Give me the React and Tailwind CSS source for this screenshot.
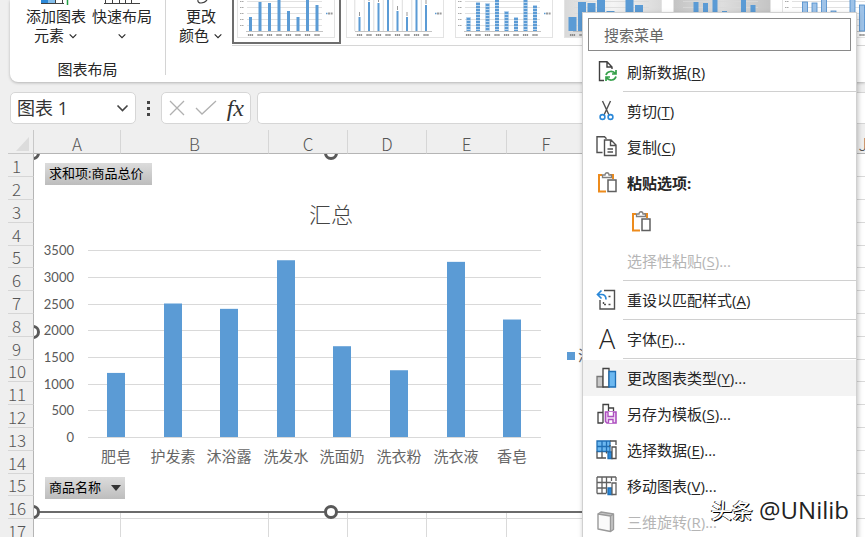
import { useState } from 'react';

const FONT = "font-['Open_Sans','Noto_Sans_CJK_SC',sans-serif]";

const sales = [
    { name: '肥皂', value: 1200 },
    { name: '护发素', value: 2500 },
    { name: '沐浴露', value: 2400 },
    { name: '洗发水', value: 3310 },
    { name: '洗面奶', value: 1700 },
    { name: '洗衣粉', value: 1250 },
    { name: '洗衣液', value: 3280 },
    { name: '香皂', value: 2200 },
];

const ticks = [3500, 3000, 2500, 2000, 1500, 1000, 500, 0];

const columns = [
    { name: 'A', width: 'w-[87px]' },
    { name: 'B', width: 'w-[148px]' },
    { name: 'C', width: 'w-[79px]' },
    { name: 'D', width: 'w-[79px]' },
    { name: 'E', width: 'w-[80px]' },
    { name: 'F', width: 'w-[79px]' },
    { name: 'G', width: 'w-[79px]' },
    { name: 'H', width: 'w-[80px]' },
    { name: 'I', width: 'w-[79px]' },
    { name: 'J', width: 'w-[79px]' },
];

function Chevron({ className }) {
    return (
        <svg viewBox="0 0 12 8" className={className} fill="none" stroke="currentColor" strokeWidth="1.3">
            <path d="M2 2l4 4 4-4" />
        </svg>
    );
}

// Small preview of the chart in one of the gallery styles
function StyleThumb({ variant }) {
    const tops = [17, 2, 3, -4, 11, 17, -4, 5];
    const dark = variant === 'gradient' || variant === 'shaded';
    const barWidth = { plain: 3, thin: 2, striped: 4, gradient: 8, shaded: 5, outline: 5 }[variant];
    return (
        <svg viewBox="0 0 98 38" className="block h-[38px] w-[98px]">
            <defs>
                <linearGradient id={`bg-${variant}`} x1="0" x2="1" y1="0" y2="0">
                    <stop offset="0" stopColor={variant === 'shaded' ? '#c4c4c4' : '#d9d9d9'} />
                    <stop offset="0.5" stopColor={variant === 'shaded' ? '#dedede' : '#f5f5f5'} />
                    <stop offset="1" stopColor={variant === 'shaded' ? '#c4c4c4' : '#d9d9d9'} />
                </linearGradient>
            </defs>
            <rect x="0.5" y="-5" width="97" height="42.5" fill={dark ? `url(#bg-${variant})` : '#fff'} stroke="#e3e3e3" />
            {variant !== 'thin' && [1, 7, 13, 19, 25].map((y) => (
                <path key={y} d={`M10 ${y + 0.5}h75`} stroke="#d9d9d9" strokeWidth="0.8" />
            ))}
            {variant !== 'thin' && !dark && [1, 7, 13, 19, 25].map((y) => (
                <path key={y} d={`M3 ${y + 0.5}h4`} stroke="#aaa" strokeWidth="1" strokeDasharray="1.4 0.4" />
            ))}
            <path d="M9 31.5h77" stroke="#b5b5b5" strokeWidth="0.8" />
            {tops.map((top, i) => {
                const x = 13.5 + i * 9.5 - (variant === 'gradient' ? 5 : 0);
                return (
                    <g key={i}>
                        {variant === 'thin' && <path d={`M${x - 4.7} -1V31`} stroke="#cfcfcf" strokeWidth="0.7" />}
                        <rect
                            x={x - barWidth / 2}
                            y={top}
                            width={barWidth}
                            height={31 - top}
                            fill={variant === 'outline' ? '#9fc3e8' : '#5b9bd5'}
                            stroke={variant === 'outline' ? '#4a8bcb' : 'none'}
                            strokeWidth="0.8"
                        />
                        {variant === 'striped' && (
                            <path d={`M${x} ${top}V31`} stroke="#fff" strokeOpacity="0.75" strokeWidth="4" strokeDasharray="0.8 2.2" />
                        )}
                        {variant === 'thin' && top > 0 && (
                            <path d={`M${x} ${top - 5}v4`} stroke="#999" strokeWidth="1" />
                        )}
                        <path d={`M${x - 2.6} 35h5.4`} stroke="#777" strokeWidth="2" strokeDasharray="1.4 0.5" opacity="0.8" />
                    </g>
                );
            })}
            <path d="M89 13.5h1.5" stroke="#5b9bd5" strokeWidth="1.5" />
            <path d="M91 13.5h5" stroke="#999" strokeWidth="2" strokeDasharray="2 0.6" />
        </svg>
    );
}

function Ribbon() {
    const styles = ['plain', 'thin', 'striped', 'gradient', 'shaded', 'outline'];
    return (
        <header className="ml-[10px] flex h-[82px] shrink-0 overflow-hidden rounded-bl-lg bg-white text-[15px] leading-[19px] text-[#262626] shadow-[0_1px_3px_rgba(0,0,0,0.25)]">
            <section className="mb-[7px] flex w-[156px] shrink-0 flex-col justify-between border-r border-[#d4d4d4]">
                <div className="flex gap-[6px] pl-4">
                    <button type="button" className="flex flex-col items-center">
                        <svg viewBox="0 0 30 7" className="h-[7px] w-[30px]" fill="none">
                            <path d="M0 0h14v3H0z" fill="#2b88d8" />
                            <path d="M7 0h7v3H7z" fill="#83beec" />
                            <path d="M0 3.5h23M14.5 0v3.5M21.5 0v3.5" stroke="#404040" />
                            <path d="M26.5 0v5" stroke="#22a045" strokeWidth="1.5" />
                        </svg>
                        <span>添加图表</span>
                        <span className="flex items-center gap-1">元素 <Chevron className="h-2 w-[10px]" /></span>
                    </button>
                    <button type="button" className="flex flex-col items-center">
                        <svg viewBox="0 0 36 7" className="h-[7px] w-9" fill="none" stroke="#404040">
                            <path d="M0 3.5h36M1.5 0v3.5M8.5 0v3.5M15.5 0v3.5M21.5 0v3.5M27.5 0v3.5" />
                        </svg>
                        <span>快速布局</span>
                        <span className="flex h-[19px] items-center"><Chevron className="h-2 w-[10px]" /></span>
                    </button>
                </div>
                <h2 className="text-center leading-3">图表布局</h2>
            </section>
            <button type="button" className="flex w-[66px] shrink-0 flex-col items-center pl-1">
                <svg viewBox="0 0 20 7" className="h-[7px] w-5" fill="none" stroke="#404040" strokeWidth="1.2">
                    <path d="M7 0c-1 4 6 4 9 0" />
                </svg>
                <span>更改</span>
                <span className="flex items-center gap-1">颜色 <Chevron className="h-2 w-[10px]" /></span>
            </button>
            <div className="flex h-[46px] w-0 grow overflow-hidden border-b border-[#d6d6d6]">
                {styles.map((variant, i) => (
                    <button
                        key={variant}
                        type="button"
                        aria-label={`样式 ${i + 1}`}
                        className={
                            i === 0
                                ? 'h-11 w-[109px] shrink-0 border-2 border-t-0 border-[#6e6e6e] px-[3px] pb-1'
                                : 'h-11 w-[109px] shrink-0 px-[5px] pb-[6px]'
                        }
                    >
                        <StyleThumb variant={variant} />
                    </button>
                ))}
            </div>
        </header>
    );
}

function FormulaBar() {
    const box = 'flex h-8 items-center rounded-[5px] border border-[#d6d6d6] bg-white';
    return (
        <div className="flex shrink-0 gap-[6px] pt-[10px] pb-[6px] pl-[10px]">
            <div className={`${box} w-[126px] pr-[5px]`}>
                <input
                    aria-label="名称框"
                    defaultValue="图表 1"
                    className="w-0 grow pl-[6px] text-lg leading-[22px] text-[#333] outline-none"
                />
                <Chevron className="h-[10px] w-[15px] text-[#444]" />
            </div>
            <svg viewBox="0 0 13 32" className="h-8 w-[13px]" fill="#444">
                <path d="M5 9h3v3H5zM5 15h3v3H5zM5 21h3v3H5z" />
            </svg>
            <div className={`${box} w-[90px] justify-between px-[6px]`}>
                <button type="button" aria-label="取消">
                    <svg viewBox="0 0 18 18" className="h-[18px] w-[18px]" fill="none" stroke="#b0b0b0" strokeWidth="1.3">
                        <path d="M2 2l14 14M16 2L2 16" />
                    </svg>
                </button>
                <button type="button" aria-label="输入">
                    <svg viewBox="0 0 22 18" className="h-[18px] w-[22px]" fill="none" stroke="#b0b0b0" strokeWidth="1.3">
                        <path d="M1 9l6 6L21 2" />
                    </svg>
                </button>
                <button type="button" className="font-['Liberation_Serif',serif] text-2xl leading-6 text-[#333] italic">
                    fx
                </button>
            </div>
            <input aria-label="编辑栏" className={`${box} w-0 grow rounded-r-none border-r-0 px-2 outline-none`} />
        </div>
    );
}

function PivotChart() {
    const y = (value) => 197 - value * 0.0534;
    const pivotButton =
        'ml-[11px] flex h-[22px] items-center self-start bg-linear-to-b from-[#dcdcdc] to-[#bdbdbd] px-1 text-[13px] text-black';
    return (
        <div className="absolute top-6 left-[34px] flex w-[594px] flex-col overflow-hidden border-b-2 border-[#6b6b6b] bg-white pt-[9px] pb-3">
            <button type="button" className={`${pivotButton} w-[107px]`}>求和项:商品总价</button>
            <h1 className="mt-[14px] text-center text-[22px] leading-[30px] font-light text-[#444]">汇总</h1>
            <svg viewBox="0 0 594 230" className="mt-[11px] h-[230px] w-[594px]">
                {ticks.map((tick) => (
                    <g key={tick}>
                        <path d={`M54 ${Math.round(y(tick)) + 0.5}h453`} stroke="#d9d9d9" />
                        <text x="40" y={Math.round(y(tick)) + 5} textAnchor="end" className="fill-[#595959] font-[Lato,sans-serif] text-[13px]">
                            {tick}
                        </text>
                    </g>
                ))}
                {sales.map((item, i) => {
                    const center = Math.round(82 + i * 56.6);
                    return (
                        <g key={item.name}>
                            <rect x={center - 9} y={y(item.value)} width="18" height={197 - y(item.value)} fill="#5b9bd5" />
                            <text x={center} y="222" textAnchor="middle" className="fill-[#666] text-[15px]">
                                {item.name}
                            </text>
                        </g>
                    );
                })}
                <rect x="533" y="112" width="8" height="8" fill="#5b9bd5" />
                <text x="544" y="121" className="fill-[#666] text-[15px]">汇总</text>
            </svg>
            <button type="button" className={`${pivotButton} mt-[7px] w-20 justify-between`}>
                商品名称
                <svg viewBox="0 0 10 6" className="h-[6px] w-[10px]" fill="#333">
                    <path d="M0 0h10L5 6z" />
                </svg>
            </button>
        </div>
    );
}

function Sheet() {
    const rows = Array.from({ length: 17 }, (_, i) => i + 1);
    const handle = 'absolute h-[14px] w-[14px] rounded-full border-[3px] border-[#595959] bg-white';
    return (
        <main className="relative grow overflow-hidden pl-2">
            <table className="w-[895px] table-fixed border-separate border-spacing-0 text-[17px] leading-5 text-[#555]">
                <thead>
                    <tr className="h-6">
                        <th className="w-[26px] border-r border-b border-[#c8c8c8] p-0">
                            <svg viewBox="0 0 25 22" className="h-[22px] w-[25px]" fill="#dcdcdc">
                                <path d="M21 6v14H8z" />
                            </svg>
                        </th>
                        {columns.map((col) => (
                            <th
                                key={col.name}
                                className={`${col.width} border-r border-b border-r-[#d6d6d6] border-b-[#b5b5b5] p-0 pt-1 font-['Noto_Sans_CJK_SC',sans-serif] leading-[18px] font-light`}
                            >
                                {col.name}
                            </th>
                        ))}
                    </tr>
                </thead>
                <tbody>
                    {rows.map((row) => (
                        <tr key={row} className={row % 5 === 0 ? 'h-[22px]' : 'h-[23px]'}>
                            <th className="border-r border-b border-r-[#b5b5b5] border-b-[#d6d6d6] p-0 pt-px pr-2 font-['Noto_Sans_CJK_SC',sans-serif] font-light">
                                {row}
                            </th>
                            {columns.map((col) => (
                                <td key={col.name} className="border-r border-b border-[#dadada] bg-white p-0" />
                            ))}
                        </tr>
                    ))}
                </tbody>
            </table>
            <PivotChart />
            {/* resize handles, cut off by the row and column headers */}
            <div className="absolute top-6 left-[34px] h-[370px] w-[594px] overflow-hidden">
                <span className={`${handle} -top-2 -left-2`} />
                <span className={`${handle} -top-2 left-[290px]`} />
                <span className={`${handle} top-[171px] -left-2`} />
                <span className={`${handle} top-[351px] -left-2`} />
                <span className={`${handle} top-[351px] left-[290px]`} />
            </div>
        </main>
    );
}

const ICON = 'h-[22px] w-[22px] shrink-0';

const icons = {
    refresh: (
        <svg viewBox="0 0 22 22" className={ICON} fill="none" stroke="#404040" strokeWidth="1.4">
            <path d="M8 19.500H3.500V0.800H11L16 6V8M11 0.800V6H16" />
            <path
                d="M10 14c1-4 7-5 9.500-1M20 9v4h-4M20 15.500c-1 4-7 5-9.500 1M10 20v-4h4"
                stroke="#35a04a"
                strokeWidth="1.7"
            />
        </svg>
    ),
    cut: (
        <svg viewBox="0 0 22 22" className={ICON} fill="none" stroke="#505050" strokeWidth="1.4">
            <path d="M6.500 1l6.500 14M14.500 1L8 15" />
            <circle cx="6.500" cy="17" r="2.400" stroke="#2b88d8" strokeWidth="1.600" />
            <circle cx="14.500" cy="17" r="2.400" stroke="#2b88d8" strokeWidth="1.600" />
        </svg>
    ),
    copy: (
        <svg viewBox="0 0 22 22" className={ICON} fill="none" stroke="#505050" strokeWidth="1.4">
            <path d="M6.500 16.500H1V0.800h7.500l2 2" />
            <path d="M8.500 4h6.500l5 5V19.500H8.500zM14.500 4v5.500H20M11.500 13h5.500M11.500 16h5.500" />
        </svg>
    ),
    paste: (
        <svg viewBox="0 0 22 22" className={ICON} fill="none" strokeWidth="1.5">
            <path d="M6 3H3v16.500H10M14 3h3v4" stroke="#ed8b1c" strokeWidth="2" />
            <path d="M6.500 5.500V3H9c0-3 4-3 4 0h2.500v2.500z" stroke="#808080" fill="#fff" strokeWidth="1.300" />
            <path d="M12 8H20V19.500h-8z" stroke="#606060" fill="#fff" />
        </svg>
    ),
    reset: (
        <svg viewBox="0 0 22 22" className={ICON} fill="none" stroke="#505050" strokeWidth="1.4">
            <path d="M8 1.500h10.500v18.500H4V11" />
            <path d="M5.500 1.500L1.500 5.500l4 4M2 5.500h3.500c3 0 4.500 2 4.500 5" stroke="#2b88d8" strokeWidth="1.700" />
            <path d="M12.500 7.500h3M7.500 13v2.500h3M12.500 15.500h3" strokeDasharray="2 1" />
        </svg>
    ),
    font: (
        <span aria-hidden="true" className="w-[22px] shrink-0 text-center text-[27px] leading-8 font-light">A</span>
    ),
    chart: (
        <svg viewBox="0 0 22 22" className={ICON} stroke="#404040" strokeWidth="1.3">
            <path d="M1 9.500h6v10.500H1z" fill="#c8c8c8" stroke="#777" />
            <path d="M7 1.500h6v18.500H7z" fill="#fff" />
            <path d="M13 4.500h6.500v15.500H13z" fill="#6cb8f0" stroke="#1f6fb5" />
        </svg>
    ),
    template: (
        <svg viewBox="0 0 22 22" className={ICON} fill="none" stroke="#404040" strokeWidth="1.3">
            <path d="M7 20H2V9.500H7M7 20V1.500h5.500V8M12.500 5h5v3" />
            <path d="M9.500 9H20V20H11l-1.500-1.500z" fill="#f3e0f6" stroke="#ad4fc0" strokeWidth="1.600" />
            <path d="M12 9v4.500h5.500V9M12.500 20v-3.500h4.500v3.500" fill="#fff" stroke="#ad4fc0" strokeWidth="1.400" />
        </svg>
    ),
    select: (
        <svg viewBox="0 0 22 22" className={ICON} fill="none" stroke="#1f6fb5" strokeWidth="1.3">
            <path d="M1 2h13v10.500H1z" fill="#6cb8f0" />
            <path d="M1 7.500h13M6 2v10.500M10.500 2v10.500" />
            <path d="M14 2h6v4M14 7.500V6M1 12.500v6.500h9M6 12.500V19M10.500 12.500v2" stroke="#505050" />
            <path d="M12 13h4v6.500h-4z" fill="#2b88d8" />
            <path d="M16 8h4v11.500h-4z" fill="#fff" stroke="#505050" />
        </svg>
    ),
    move: (
        <svg viewBox="0 0 22 22" className={ICON} fill="none" stroke="#606060" strokeWidth="1.3">
            <path d="M1 2h19M1 7.500h14M1 13h9.500M1 18.500h9M1 2v16.500M6 2v16.500M10.500 2v16.500M15.500 2v4M20 2v4" />
            <path d="M12 13h4v6.500h-4z" fill="#2b88d8" stroke="#1f6fb5" />
            <path d="M16 8h4v11.500h-4z" fill="#fff" />
        </svg>
    ),
    rotate: (
        <svg viewBox="0 0 22 22" className={ICON} fill="none" stroke="#9a9a9a" strokeWidth="1.4" strokeLinejoin="round">
            <path d="M2 3l3-2 12.500 2v15.500L14.500 20.500" fill="#c8c8c8" />
            <path d="M2 3l12.500 2v15.500L2 18z" fill="#fafafa" />
            <path d="M14.500 5l3-2" />
        </svg>
    ),
};

const menuItems = [
    { id: 'refresh', label: '刷新数据', hotkey: 'R' },
    { id: 'sep1' },
    { id: 'cut', label: '剪切', hotkey: 'T' },
    { id: 'copy', label: '复制', hotkey: 'C' },
    { id: 'paste', heading: '粘贴选项:' },
    { id: 'special', label: '选择性粘贴', hotkey: 'S', dots: true, disabled: true },
    { id: 'sep2' },
    { id: 'reset', label: '重设以匹配样式', hotkey: 'A' },
    { id: 'sep3' },
    { id: 'font', label: '字体', hotkey: 'F', dots: true },
    { id: 'sep4' },
    { id: 'chart', label: '更改图表类型', hotkey: 'Y', dots: true },
    { id: 'template', label: '另存为模板', hotkey: 'S', dots: true },
    { id: 'select', label: '选择数据', hotkey: 'E', dots: true },
    { id: 'move', label: '移动图表', hotkey: 'V', dots: true },
    { id: 'rotate', label: '三维旋转', hotkey: 'R', dots: true, disabled: true },
];

function ContextMenu() {
    const [active, setActive] = useState('chart');
    const row = 'flex h-9 w-full items-center gap-[9px] pl-[13px] text-left';

    return (
        <div className="absolute top-3 left-[582px] w-[275px] border border-[#d0d0d0] bg-white pt-[5px] pb-2 text-[15px] text-[#262626] shadow-[1px_2px_5px_rgba(0,0,0,0.25)]">
            <input
                type="text"
                aria-label="搜索菜单"
                placeholder="搜索菜单"
                className="mb-[3px] ml-[5px] h-[33px] w-[263px] border border-[#8a8a8a] pl-[15px] outline-none placeholder:text-[#666]"
            />
            {menuItems.map((item) => {
                if (item.heading) {
                    return (
                        <div key={item.id}>
                            <div className={`${row} font-bold`}>
                                {icons.paste}
                                <span>{item.heading}</span>
                            </div>
                            <button type="button" aria-label="粘贴" className="ml-[47px] flex h-[42px] items-center">
                                {icons.paste}
                            </button>
                        </div>
                    );
                }
                if (!item.label) {
                    return <hr key={item.id} className="my-px ml-10 border-[#d0d0d0]" />;
                }
                return (
                    <button
                        key={item.id}
                        type="button"
                        disabled={item.disabled}
                        onMouseEnter={() => setActive(item.id)}
                        className={`${row} ${active === item.id ? 'bg-[#f3f3f3]' : ''} ${item.disabled ? 'text-[#b5b5b5]' : ''}`}
                    >
                        {icons[item.id] || <span className="w-[22px] shrink-0" />}
                        <span>
                            {item.label}(<u className="underline-offset-2">{item.hotkey}</u>){item.dots && '...'}
                        </span>
                    </button>
                );
            })}
        </div>
    );
}

function App() {
    return (
        <div className={`relative flex h-screen flex-col overflow-hidden bg-[#efefef] ${FONT}`}>
            <Ribbon />
            <FormulaBar />
            <Sheet />
            <ContextMenu />
            <p className="pointer-events-none absolute right-4 bottom-3 flex items-center gap-[6px] text-2xl leading-[30px]">
                <span className="text-[21px] font-medium text-white [text-shadow:-1px_0_0_#222,1px_1px_0_#000]">头条</span>
                <span className="text-[#222] [text-shadow:-1px_-1px_0_#fff,1px_1px_0_#fff]">@UNilib</span>
            </p>
        </div>
    );
}

export default App;
